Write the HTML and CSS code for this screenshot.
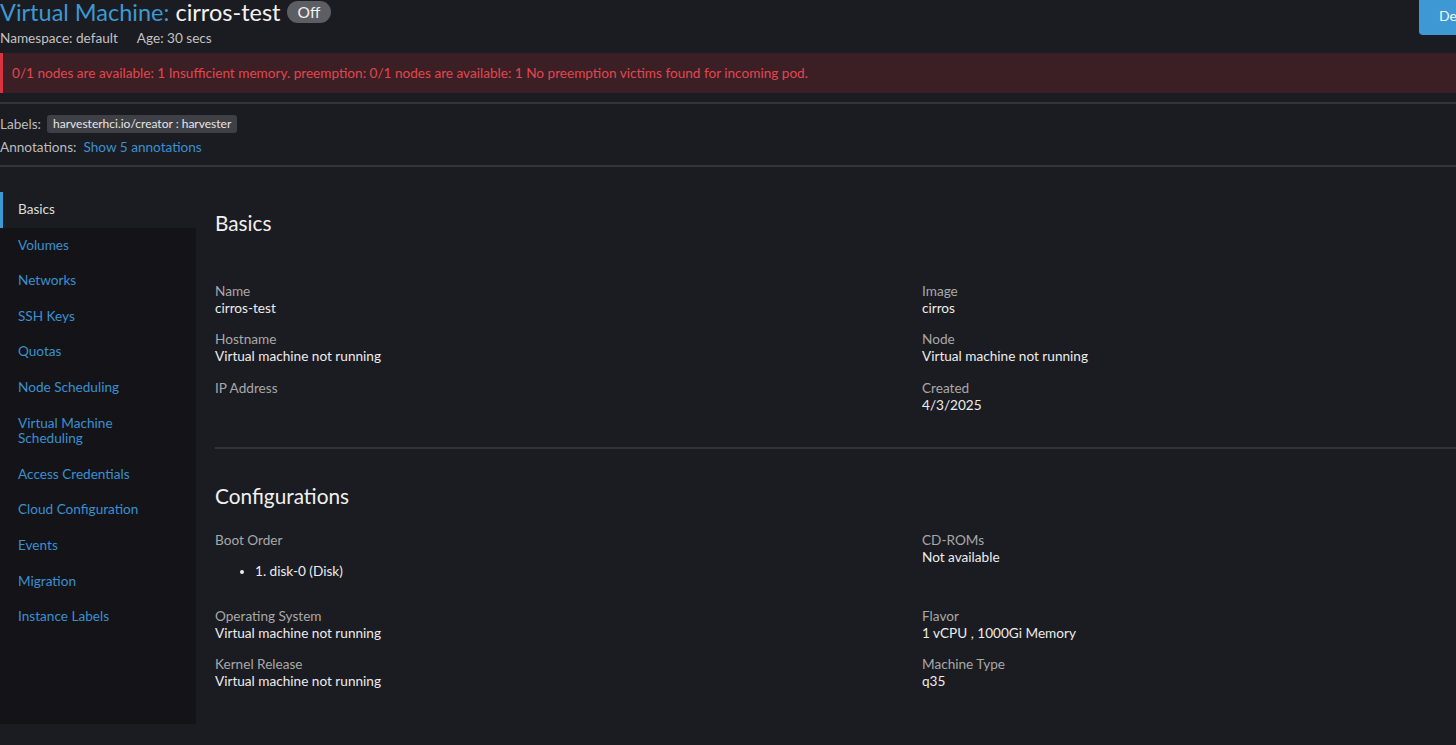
FILE: index.html
```html
<!DOCTYPE html>
<html lang="en">
<head>
<meta charset="utf-8">
<title>Virtual Machine: cirros-test</title>
<link rel="stylesheet" href="styles.css">
</head>
<body>
<div class="page">
  <header class="masthead">
    <div class="title-block">
      <h1 class="title"><span class="type">Virtual Machine:</span> <span class="name">cirros-test</span> <span class="badge">Off</span></h1>
      <div class="meta"><span>Namespace: default</span><span>Age: 30 secs</span></div>
    </div>
    <button class="btn" type="button">Delete</button>
  </header>

  <div class="banner">0/1 nodes are available: 1 Insufficient memory. preemption: 0/1 nodes are available: 1 No preemption victims found for incoming pod.</div>

  <div class="divider"></div>

  <div class="meta-rows">
    <div class="meta-row labels-row"><span class="key">Labels:</span><span class="chip">harvesterhci.io/creator : harvester</span></div>
    <div class="meta-row"><span class="key">Annotations:</span><a class="link" href="#">Show 5 annotations</a></div>
  </div>

  <div class="divider"></div>

  <div class="detail">
    <ul class="tabs">
      <li class="tab active">Basics</li>
      <li class="tab">Volumes</li>
      <li class="tab">Networks</li>
      <li class="tab">SSH Keys</li>
      <li class="tab">Quotas</li>
      <li class="tab">Node Scheduling</li>
      <li class="tab">Virtual Machine<br>Scheduling</li>
      <li class="tab">Access Credentials</li>
      <li class="tab">Cloud Configuration</li>
      <li class="tab">Events</li>
      <li class="tab">Migration</li>
      <li class="tab">Instance Labels</li>
    </ul>

    <main class="panel">
      <h3 class="section-title basics-title">Basics</h3>
      <div class="fields">
        <div class="field"><div class="label">Name</div><div class="value">cirros-test</div></div>
        <div class="field"><div class="label">Image</div><div class="value">cirros</div></div>
        <div class="field"><div class="label">Hostname</div><div class="value">Virtual machine not running</div></div>
        <div class="field"><div class="label">Node</div><div class="value">Virtual machine not running</div></div>
        <div class="field"><div class="label">IP Address</div></div>
        <div class="field"><div class="label">Created</div><div class="value">4/3/2025</div></div>
      </div>

      <div class="section-divider"></div>

      <h3 class="section-title config-title">Configurations</h3>
      <div class="fields">
        <div class="field">
          <div class="label">Boot Order</div>
          <ul class="boot-list"><li>1. disk-0 (Disk)</li></ul>
        </div>
        <div class="field"><div class="label">CD-ROMs</div><div class="value">Not available</div></div>
        <div class="field"><div class="label">Operating System</div><div class="value">Virtual machine not running</div></div>
        <div class="field"><div class="label">Flavor</div><div class="value">1 vCPU , 1000Gi Memory</div></div>
        <div class="field"><div class="label">Kernel Release</div><div class="value">Virtual machine not running</div></div>
        <div class="field"><div class="label">Machine Type</div><div class="value">q35</div></div>
      </div>
    </main>
  </div>
</div>
</body>
</html>
```

FILE: styles.css
```css
* { box-sizing: border-box; }

html, body {
  margin: 0;
  padding: 0;
}

body {
  background: #1b1c21;
  color: #e6e6e6;
  font-family: Lato, "Open Sans", "Liberation Sans", sans-serif;
  font-size: 13.6px;
  height: 745px;
  overflow: hidden;
}

.page {
  width: 100%;
}

/* Masthead */
.masthead {
  display: flex;
  align-items: flex-start;
}

.title-block {
  flex: 1;
  margin-top: -3px;
}

.title {
  margin: 0;
  font-size: 23.5px;
  font-weight: 400;
  line-height: 30px;
  white-space: nowrap;
}

.title .type {
  color: #3d98d3;
}

.title .name {
  color: #f2f2f2;
}

.badge {
  display: inline-block;
  vertical-align: top;
  margin-top: 4px;
  height: 22px;
  line-height: 22px;
  padding: 0 11px;
  border-radius: 11px;
  background: #5d5e63;
  color: #f0f0f0;
  font-size: 15.5px;
}

.meta {
  display: flex;
  gap: 19px;
  margin-top: 2px;
  line-height: 18px;
  color: #c2c2c2;
}

.btn {
  margin-top: -5px;
  margin-right: -44px;
  height: 40px;
  padding: 0 20px;
  border: 0;
  border-radius: 4px;
  background: #3d98d3;
  color: #f4f8fb;
  font-family: inherit;
  font-size: 14px;
}

/* Banner */
.banner {
  margin-top: 6px;
  padding: 11px 9px;
  line-height: 18px;
  background: #3b1f25;
  border-left: 3px solid #d9333f;
  color: #e0474f;
  white-space: nowrap;
}

.divider {
  height: 2px;
  background: #333439;
  margin-top: 9px;
}

/* Labels / annotations */
.meta-rows {
  padding: 8px 0 8px;
}

.meta-row {
  display: flex;
  align-items: center;
  gap: 6px;
  height: 20px;
  color: #bdbdbd;
}

.labels-row {
  height: 24px;
  margin-bottom: 1px;
}

.chip {
  height: 18px;
  line-height: 18px;
  padding: 0 6px;
  border-radius: 3px;
  background: #3f4046;
  color: #e6e6e6;
  font-size: 12px;
}

.link {
  color: #3a90d0;
  text-decoration: none;
  margin-left: 1px;
}

.meta-rows + .divider {
  margin-top: 0;
}

/* Detail */
.detail {
  display: flex;
  align-items: flex-start;
  margin-top: 25px;
}

.tabs {
  list-style: none;
  margin: 0;
  padding: 0;
  width: 196px;
  height: 532px;
  flex: none;
  background: #141418;
}

.tab {
  padding: 10px 10px 10px 18px;
  line-height: 15.6px;
  color: #3a90d0;
}

.tab.active {
  background: #1b1c21;
  border-left: 3px solid #3d98d3;
  padding-left: 15px;
  color: #dcdcdc;
}

.panel {
  flex: 1;
  padding: 19px 0 0 19px;
}

.section-title {
  margin: 0;
  font-size: 20.8px;
  font-weight: 400;
  line-height: 24px;
  color: #f0f0f0;
}

.basics-title {
  margin-bottom: 47.5px;
}

.config-title {
  margin-top: 35px;
  margin-bottom: 23.5px;
}

.fields {
  display: grid;
  grid-template-columns: 707px 1fr;
  row-gap: 14.5px;
}

.field .label {
  line-height: 17px;
  color: #a8a8a8;
}

.field .value {
  line-height: 17px;
  color: #ececec;
}

.section-divider {
  height: 2px;
  background: #333439;
  margin-top: 33.5px;
}

.boot-list {
  margin: 14px 0 13.5px;
  padding-left: 40px;
  line-height: 17px;
  color: #ececec;
}
```
